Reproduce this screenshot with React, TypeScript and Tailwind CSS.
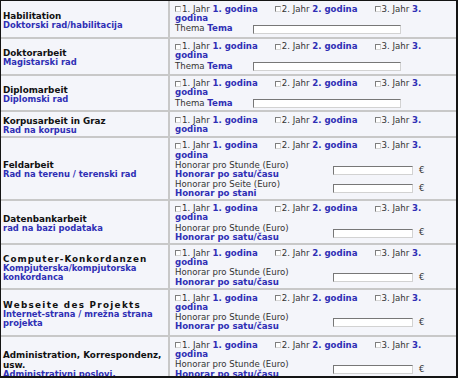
import React from "react";

const B = "font-bold text-[#2f2fb5]";

function Cb() {
  return (
    <span className="inline-block w-[6px] h-[6px] mr-[1px] align-[-0.5px] bg-white border border-t-[#7d7d7d] border-l-[#7d7d7d] border-r-[#d6d6d6] border-b-[#d6d6d6]" />
  );
}

function Box({ wide }: { wide: boolean }) {
  return (
    <span
      className={
        (wide ? "w-[148px]" : "w-[80px]") +
        " block h-[9px] bg-white border border-t-[#777777] border-l-[#777777] border-r-[#d2d2d2] border-b-[#d2d2d2]"
      }
    />
  );
}

function Years() {
  return (
    <div className="w-[256px] leading-[9.3px]">
      <Cb />1. Jahr <b className={B}>1. godina</b>
      <span className="inline-block w-[17px]" />
      <Cb />2. Jahr <b className={B}>2. godina</b>
      <span className="inline-block w-[17px]" />
      <Cb />3. Jahr <b className={B}>3.</b> <b className={B}>godina</b>
    </div>
  );
}

function Honorar({ de, hr, first }: { de: string; hr: string; first: boolean }) {
  return (
    <div className={(first ? "mt-[1px] " : "") + "flex items-center leading-[9.3px]"}>
      <div className="w-[158px]">
        <div>{de}</div>
        <div className={B}>{hr}</div>
      </div>
      <Box wide={false} />
      <span className="ml-[6px] text-[#333]">€</span>
    </div>
  );
}

type Kind = "thema" | "none" | "stunde" | "both";

const rows: { de: string; hr: string; kind: Kind; track: string; pad: string }[] = [
  { de: "Habilitation", hr: "Doktorski rad/habilitacija", kind: "thema", track: "", pad: "pb-[2.5px]" },
  { de: "Doktorarbeit", hr: "Magistarski rad", kind: "thema", track: "", pad: "pb-[2px]" },
  { de: "Diplomarbeit", hr: "Diplomski rad", kind: "thema", track: "", pad: "pb-[1.5px]" },
  { de: "Korpusarbeit in Graz", hr: "Rad na korpusu", kind: "none", track: "", pad: "pb-[1.5px]" },
  { de: "Feldarbeit", hr: "Rad na terenu / terenski rad", kind: "both", track: "", pad: "pb-[0.5px]" },
  { de: "Datenbankarbeit", hr: "rad na bazi podataka", kind: "stunde", track: "", pad: "pb-[1px]" },
  {
    de: "Computer-Konkordanzen",
    hr: "Kompjuterska/kompjutorska konkordanca",
    kind: "stunde",
    track: "tracking-[1px]",
    pad: "pb-[1px]",
  },
  {
    de: "Webseite des Projekts",
    hr: "Internet-strana / mrežna strana projekta",
    kind: "stunde",
    track: "tracking-[1.3px]",
    pad: "pb-[3.5px]",
  },
  {
    de: "Administration, Korrespondenz, usw.",
    hr: "Administrativni poslovi, korespondencija, itd.",
    kind: "both",
    track: "",
    pad: "pb-[1.5px]",
  },
];

export default function App() {
  return (
    <div
      className="w-[458px] h-[378px] overflow-hidden bg-[#c8c8c8] border-t border-l border-r-2 border-b-2 border-[#141414]"
      style={{ fontFamily: '"DejaVu Sans", Verdana, sans-serif' }}
    >
      <div className="grid grid-cols-[167px_1fr] gap-[2px]">
        {rows.map((r) => (
          <React.Fragment key={r.de}>
            <div className="bg-[#f4f5fa] pl-[2px] pr-[3px] pt-[3px] flex flex-col justify-center">
              <div className={"font-bold text-[8.8px] leading-[10px] text-[#111] " + r.track}>{r.de}</div>
              <div className="font-bold text-[8.4px] leading-[9.3px] text-[#2f2fb5]">{r.hr}</div>
            </div>
            <div className={"bg-[#f4f5fa] pl-[5px] pt-[3.5px] text-[8.6px] text-[#333] " + r.pad}>
              <Years />
              {r.kind === "thema" && (
                <div className="flex items-center h-[10px] mt-[1px] leading-[9.3px]">
                  <span className="w-[78px]">
                    Thema <b className={B}>Tema</b>
                  </span>
                  <Box wide={true} />
                </div>
              )}
              {(r.kind === "stunde" || r.kind === "both") && (
                <Honorar de="Honorar pro Stunde (Euro)" hr="Honorar po satu/času" first={true} />
              )}
              {r.kind === "both" && (
                <Honorar de="Honorar pro Seite (Euro)" hr="Honorar po stani" first={false} />
              )}
            </div>
          </React.Fragment>
        ))}
      </div>
    </div>
  );
}
